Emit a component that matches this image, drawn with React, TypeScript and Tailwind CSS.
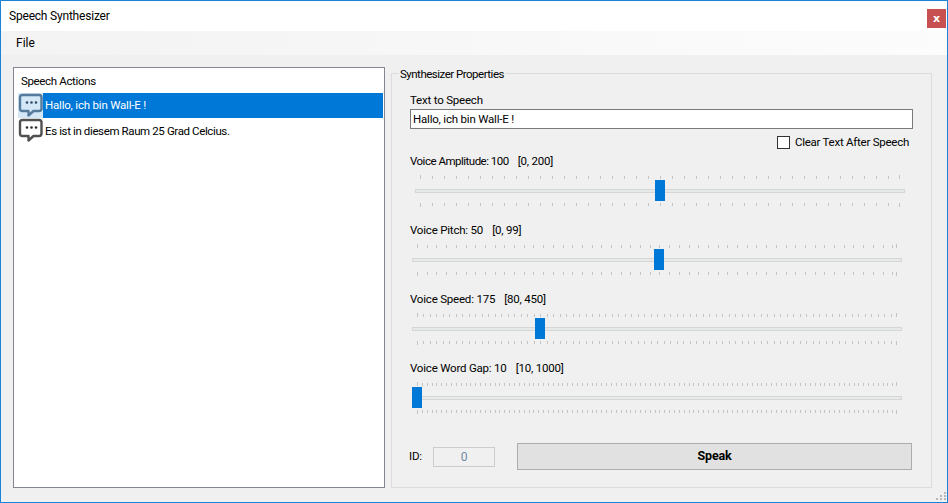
const sliders = [
  { label: "Voice Amplitude: 100", range: "[0, 200]", tight: "tracking-[-0.5px]", indent: "ml-[5px]", thumb: 240, step: 12 },
  { label: "Voice Pitch: 50", range: "[0, 99]", tight: "", indent: "ml-[2px]", thumb: 242, step: 9.7 },
  { label: "Voice Speed: 175", range: "[80, 450]", tight: "", indent: "ml-[2px]", thumb: 123, step: 6.49 },
  { label: "Voice Word Gap: 10", range: "[10, 1000]", tight: "", indent: "ml-[2px]", thumb: 0, step: 4.85 },
]

const BubbleIcon = ({ selected }: { selected?: boolean }) => {
  const stroke = selected ? "#567a9c" : "#505050"
  const fill = selected ? "#d3e7f7" : "#ffffff"
  const dot = selected ? "#2f4a66" : "#2b2b2b"
  return (
    <svg width="25" height="25" viewBox="0 0 25 25" className="shrink-0">
      <path
        d="M4.5 2 H21 Q23.5 2 23.5 4.5 V15.5 Q23.5 18 21 18 H15.5 L10.5 22.5 V18 H4.5 Q2 18 2 15.5 V4.5 Q2 2 4.5 2 Z"
        fill={fill}
        stroke={stroke}
        strokeWidth="2.4"
        strokeLinejoin="round"
      />
      <circle cx="9" cy="9.5" r="1.3" fill={dot} />
      <circle cx="13.5" cy="9.5" r="1.3" fill={dot} />
      <circle cx="18" cy="9.5" r="1.3" fill={dot} />
    </svg>
  )
}

const Ticks = ({ step }: { step: number }) => {
  const xs: number[] = []
  for (let x = 5; x < 481; x += step) xs.push(Math.round(x))
  xs.push(484)
  return (
    <svg width="490" height="53" className="absolute top-0 left-0">
      {xs.map((x, i) => {
        const end = i === 0 || i === xs.length - 1
        return (
          <g key={i} fill="#c4c4c4">
            <rect x={x} y={end ? 6 : 7} width="1" height={end ? 4 : 3} />
            <rect x={x} y="34" width="1" height={end ? 4 : 3} />
          </g>
        )
      })}
    </svg>
  )
}

const Slider = ({ label, range, tight, indent, thumb, step }: (typeof sliders)[number]) => (
  <div>
    <div className="h-4 leading-4 flex gap-[9px]">
      <span className={tight}>{label}</span>
      <span>{range}</span>
    </div>
    <div className={`relative h-[53px] w-[490px] pt-5 ${indent}`}>
      <Ticks step={step} />
      <div className="h-1 border border-[#d6d6d6] bg-[#e7eaea]" />
      <div className="absolute top-[11px] w-2.5 h-[21px] bg-[#0078d7]" style={{ left: thumb }} />
    </div>
  </div>
)

export default function App() {
  return (
    <div className="relative w-[948px] h-[503px] flex flex-col border border-[#1883d7] bg-[#f0f0f0] text-[11.5px] tracking-[-0.2px] text-black overflow-hidden font-['Roboto',sans-serif]">
      <div className="h-[30px] shrink-0 bg-white flex items-center justify-between pl-2 pr-[1px]">
        <span className="text-[12px] tracking-[-0.2px]">Speech Synthesizer</span>
        <div className="w-[19px] h-[19px] mt-[5px] bg-[#c75050] text-white flex items-center justify-center font-bold font-['DejaVu_Sans',sans-serif] text-[11px] leading-none">x</div>
      </div>
      <div className="h-6 shrink-0 bg-gradient-to-r from-[#f3f3f3] to-[#fcfcfc] flex items-center pl-[15px] text-[12px] tracking-normal">File</div>

      <div className="flex-1 flex pl-3 pt-3">
        <div className="w-[372px] h-[421px] border border-[#828790] bg-white">
          <div className="h-[25px] pl-[7px] pt-[5px] leading-4 tracking-[-0.35px]">Speech Actions</div>
          <div className="flex h-[25px] items-center ml-[4px] mr-px">
            <div className="w-[25px] h-[25px] bg-[#d3e7f7] shrink-0"><BubbleIcon selected /></div>
            <div className="flex-1 h-full bg-[#0078d7] text-white pl-[2px] leading-[25px]">Hallo, ich bin Wall-E !</div>
          </div>
          <div className="flex h-[25px] items-center ml-[4px] mr-px">
            <BubbleIcon />
            <div className="pl-[2px] pt-px leading-[25px] tracking-[-0.38px]">Es ist in diesem Raum 25 Grad Celcius.</div>
          </div>
        </div>

        <div className="relative ml-[6px] mt-[6px] w-[541px] h-[415px] border border-[#dcdcdc] pl-[18px] pt-[18px]">
          <span className="absolute -top-2 left-[7px] px-px bg-[#f0f0f0] leading-4 tracking-[-0.5px]">Synthesizer Properties</span>
          <div className="h-4 leading-4">Text to Speech</div>
          <input
            readOnly
            value="Hallo, ich bin Wall-E !"
            className="mt-px block w-[503px] h-5 border border-[#7a7a7a] bg-white px-[2px] outline-none"
          />
          <div className="mt-[7px] w-[503px] h-[13px] flex items-center justify-end gap-[5px] pr-1">
            <div className="w-[13px] h-[13px] border border-[#333333] bg-white" />
            <span className="pt-px tracking-[-0.25px]">Clear Text After Speech</span>
          </div>
          <div className="mt-1">
            {sliders.map((s) => <Slider key={s.label} {...s} />)}
          </div>
          <div className="mt-[14px] h-[27px] flex items-center">
            <span className="-ml-px w-6">ID:</span>
            <div className="w-[62px] h-5 border border-[#cccccc] text-center leading-[18px] text-[12px] text-[#6d8aa8]">0</div>
            <button className="ml-[22px] w-[395px] h-[27px] border border-[#adadad] bg-[#e1e1e1] font-bold text-[12.5px]">Speak</button>
          </div>
        </div>
      </div>

      <svg width="11" height="10" className="absolute bottom-0 right-0" fill="#b8b8b8">
        <rect x="8" y="0" width="2" height="2" />
        <rect x="4" y="3" width="2" height="2" />
        <rect x="8" y="3" width="2" height="2" />
        <rect x="0" y="6" width="2" height="2" />
        <rect x="4" y="6" width="2" height="2" />
        <rect x="8" y="6" width="2" height="2" />
      </svg>
    </div>
  )
}
